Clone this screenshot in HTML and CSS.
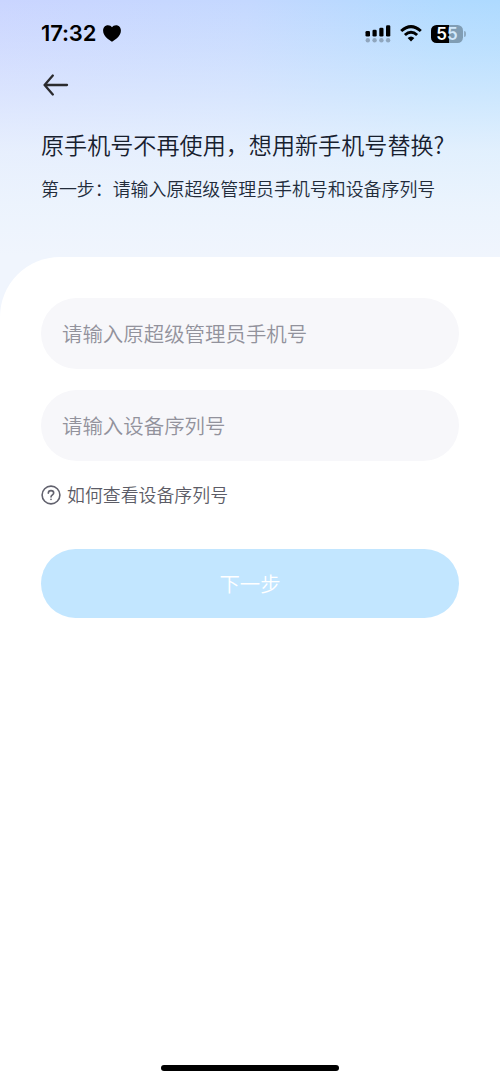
FILE: index.html
```html
<!DOCTYPE html>
<html lang="zh-CN">
<head>
<meta charset="utf-8">
<meta name="viewport" content="width=device-width, initial-scale=1">
<title>更换手机号</title>
<link rel="stylesheet" href="styles.css">
</head>
<body>
<div class="screen">
  <header class="hero">
    <div class="status">
      <div class="status-left">
        <span class="clock">17:32</span>
        <svg class="heart" width="18" height="17" viewBox="0 0 18 17"><path d="M9 16.700C6.300 14.900.1 11.200.1 5.700.1 2.500 2.200.3 4.900.3 6.800.3 8.200 1.200 9 2.300 9.800 1.200 11.200.3 13.100.3c2.700 0 4.800 2.200 4.800 5.400C17.900 11.200 11.700 14.900 9 16.700Z"/></svg>
      </div>
      <div class="status-right">
        <svg class="signal" width="26" height="18" viewBox="0 0 26 18">
          <rect x="0.500" y="6" width="4.500" height="5.500" rx="1.300"/>
          <rect x="7.500" y="4.800" width="4.200" height="6.700" rx="1.300"/>
          <rect x="14.300" y="2.700" width="4.200" height="8.800" rx="1.300"/>
          <rect x="21" y="0.200" width="4.300" height="11.300" rx="1.300"/>
          <g class="faded"><circle cx="2.800" cy="15.200" r="2.200"/><circle cx="9.600" cy="15.200" r="2.200"/><circle cx="16.400" cy="15.200" r="2.200"/><circle cx="23.100" cy="15.200" r="2.200"/></g>
        </svg>
        <svg class="wifi" width="22" height="17" viewBox="0 0 22 17">
          <g fill="none" stroke="#000" stroke-width="3"><path d="M1.200 6Q11-2.800 20.800 6"/><path d="M4.900 10Q11 4.500 17.100 10"/></g>
          <path d="M11 16.500 7.600 13Q11 10 14.400 13Z"/>
        </svg>
        <div class="battery"><div class="cell"><span>5</span><span>5</span></div><i class="cap"></i></div>
      </div>
    </div>
    <svg class="back" width="26" height="22" viewBox="0 0 26 22"><path d="M9.800 1.500 1.600 11 9.800 20.500M1.600 11H24"/></svg>
    <h1 class="title">原手机号不再使用，想用新手机号替换?</h1>
    <p class="subtitle">第一步：请输入原超级管理员手机号和设备序列号</p>
  </header>
  <main class="sheet">
    <div class="field">请输入原超级管理员手机号</div>
    <div class="field">请输入设备序列号</div>
    <div class="help">
      <svg width="20" height="20" viewBox="0 0 20 20"><circle cx="10" cy="10" r="8.900"/><path d="M7.300 8.200C7.300 6.500 8.400 5.600 10 5.600s2.700.95 2.700 2.400C12.700 9.800 10 9.800 10 12"/><path d="M10 14.200V14.400"/></svg>
      <span>如何查看设备序列号</span>
    </div>
    <div class="next">下一步</div>
    <div class="home"></div>
  </main>
</div>
</body>
</html>
```
FILE: styles.css
```css
* { box-sizing: border-box; }
body { margin: 0; font-family: "Noto Sans CJK SC", sans-serif; font-weight: 350; }
.screen {
  width: 500px;
  height: 1082px;
  display: flex;
  flex-direction: column;
  overflow: hidden;
  background:
    linear-gradient(180deg, rgba(238,245,253,0) 0, rgba(238,245,253,.24) 50px, rgba(238,245,253,.48) 95px, rgba(238,245,253,.8) 150px, rgba(238,245,253,.95) 205px, #f0f5fd 256px),
    linear-gradient(98deg, #cad5ff 0, #c4d8ff 38%, #b0daff 68%, #a8daff 100%);
}
.hero { height: 256.500px; flex: none; padding: 20px 34px 0 41px; display: flex; flex-direction: column; align-items: flex-start; }
.status { align-self: stretch; height: 27px; display: flex; align-items: center; justify-content: space-between; }
.status-left { display: flex; align-items: center; gap: 7px; }
.clock { font: 600 22px/27px Inter, sans-serif; letter-spacing: -.15px; }
.status-right { display: flex; align-items: center; }
.signal { margin-right: 9px; }
.wifi { margin-right: 9px; }
.faded { opacity: .25; }
.battery { display: flex; align-items: center; gap: 1px; }
.cell {
  width: 32px; height: 18px; border-radius: 5.500px;
  display: flex; justify-content: center;
  background: linear-gradient(90deg, #000 55%, #809db4 55%);
  color: #fff; font: 600 17px/18px Inter, sans-serif;
}
.cell span + span { color: #d1e9fc; }
.cap { width: 2px; height: 6px; border-radius: 0 2px 2px 0; background: #8eabc3; }
.back { margin: 27px 0 0 2px; fill: none; stroke: #2b2b2e; stroke-width: 2.300; stroke-linecap: round; stroke-linejoin: round; }
.title { margin: 31px 0 0; font-size: 23.100px; line-height: 34px; font-weight: 350; color: #17202e; white-space: nowrap; }
.subtitle { margin: 14px 0 0; font-size: 17.930px; line-height: 26px; color: #222c3b; white-space: nowrap; }
.sheet { flex: 1; background: #fff; border-radius: 60px 0 0 0; padding: 41.500px 41px 11px; display: flex; flex-direction: column; }
.field { height: 71px; margin-bottom: 21px; padding-left: 21px; border-radius: 36px; background: #f7f7fa; color: #92929c; font-size: 20.450px; line-height: 71px; }
.help { height: 26px; display: flex; align-items: center; gap: 6px; color: #5c5c66; font-size: 17.900px; line-height: 26px; }
.help span { margin-top: -2px; }
.help svg { fill: none; stroke: #62626e; stroke-width: 1.600; stroke-linecap: round; }
.next { height: 69px; margin-top: 40.500px; border-radius: 35px; background: #c2e6ff; color: #fff; font-size: 20.400px; line-height: 68px; text-align: center; }
.home { width: 178px; height: 6px; margin: auto auto 0; border-radius: 3px; background: #000; }
```
